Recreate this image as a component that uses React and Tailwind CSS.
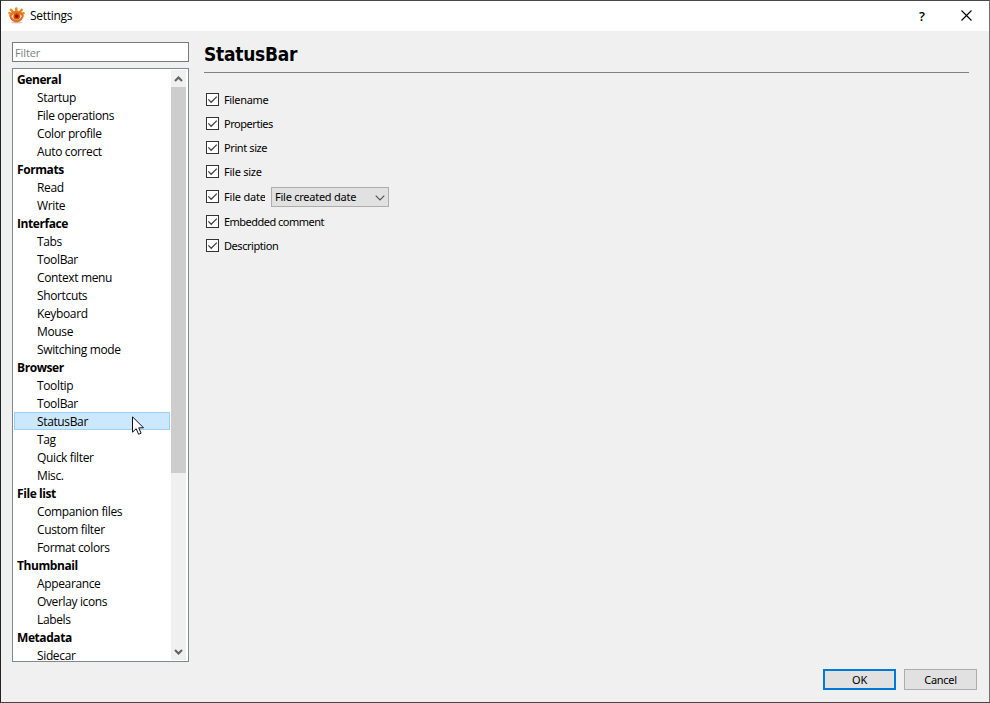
import React from "react";

const TREE = [
  ["General", ["Startup", "File operations", "Color profile", "Auto correct"]],
  ["Formats", ["Read", "Write"]],
  ["Interface", ["Tabs", "ToolBar", "Context menu", "Shortcuts", "Keyboard", "Mouse", "Switching mode"]],
  ["Browser", ["Tooltip", "ToolBar", "StatusBar", "Tag", "Quick filter", "Misc."]],
  ["File list", ["Companion files", "Custom filter", "Format colors"]],
  ["Thumbnail", ["Appearance", "Overlay icons", "Labels"]],
  ["Metadata", ["Sidecar"]],
];

function AppIcon() {
  return (
    <svg width="17" height="17" viewBox="0 0 17 17" className="block">
      <g stroke="#ee8a1d" strokeWidth="2.5" strokeLinecap="round">
        <path d="M8.300 4V1.600M4.800 5L3 2.800M11.900 5l1.800-2.100M3.200 7L1.400 6.200M13.800 7l1.800-.8" />
      </g>
      <ellipse cx="8.500" cy="15.600" rx="5.500" ry=".9" fill="#c9c9c9" />
      <path d="M1.200 8.500C3 5 5.500 3.700 8.500 3.700s5.700 1.300 7.400 4.800c-1 4-3.700 6.800-7.400 6.800S2 12.500 1.200 8.500Z" fill="#e6731b" />
      <path d="M3.300 9c1.500-2 3.200-2.800 5.200-2.800S12.200 7 13.900 9c-1.200 2.600-3 3.700-5.300 3.700S4.500 11.500 3.300 9Z" fill="#f8dcc0" />
      <circle cx="8.700" cy="9.200" r="3.300" fill="#d24a0c" />
      <circle cx="8.700" cy="9.200" r="1.700" fill="#8b1405" />
    </svg>
  );
}

function Check({ children, className = "", textClass = "tracking-[-0.4px]" }) {
  return (
    <label className={"flex items-start h-[14px] " + className}>
      <span className="flex h-[13px] w-[13px] shrink-0 border border-[#333] bg-white">
        <svg width="11" height="11" viewBox="0 0 11 11" className="block" fill="none" stroke="#444" strokeWidth="1.3">
          <path d="M1.300 5.400L4.200 8.300L9.800 2.600" />
        </svg>
      </span>
      <span className={"ml-[5px] whitespace-nowrap " + textClass}>{children}</span>
    </label>
  );
}

export default function App() {
  return (
    <div className="flex h-[703px] w-[990px] flex-col overflow-hidden border border-t-[#4a4747] border-r-[#707070] border-b-[#454343] border-l-[#242226] bg-[#f0f0f0] text-black font-['Open_Sans','Noto_Sans',sans-serif]">
      <header className="flex h-[30px] shrink-0 items-center bg-white">
        <div className="-mt-[2px] ml-[7px]"><AppIcon /></div>
        <span className="ml-[5px] text-[12px] leading-[16px] tracking-[-0.3px]">Settings</span>
        <span className="ml-auto mr-[35px] w-[8px] text-center text-[13px] leading-[16px] font-semibold">?</span>
        <svg width="11" height="11" viewBox="0 0 11 11" className="mr-[17px] -mt-px" stroke="#000" strokeWidth="1.100">
          <path d="M.5.5l10 10M10.500.5l-10 10" />
        </svg>
      </header>
      <div className="flex min-h-0 flex-1">
        <aside className="relative ml-[11px] mt-[11px] flex w-[177px] shrink-0 flex-col">
          <div className="flex h-[20px] items-center border border-[#7a7a7a] bg-white pl-[2px] pt-[2px] text-[11px] leading-[14px] tracking-[-0.1px] text-[#808080]">Filter</div>
          <div className="mt-[6px] flex h-[594px] border border-[#828790] bg-white p-px">
            <div className="w-[156px] overflow-hidden text-[12px] leading-[20px] tracking-[-0.36px]">
              {TREE.map(([group, items]) => (
                <div key={group}>
                  <div className="h-[18px] whitespace-nowrap pl-[3px] font-bold tracking-[-0.42px]">{group}</div>
                  {items.map((item) => (
                    <div
                      key={item}
                      className={
                        "h-[18px] whitespace-nowrap " +
                        (item === "StatusBar" ? "border border-[#99d1ff] bg-[#cce8ff] pl-[22px] leading-[18px]" : "pl-[23px]")
                      }
                    >
                      {item}
                    </div>
                  ))}
                </div>
              ))}
            </div>
            <div className="ml-px flex w-[15px] flex-col items-center bg-[#f0f0f0]">
              <svg width="15" height="17" viewBox="0 0 15 17" fill="none" stroke="#606060" strokeWidth="2">
                <path d="M4 11L7.500 7.500L11 11" />
              </svg>
              <div className="h-[386px] w-[15px] bg-[#cdcdcd]" />
              <svg width="15" height="17" viewBox="0 0 15 17" className="mt-auto" fill="none" stroke="#606060" strokeWidth="2">
                <path d="M4 7L7.500 10.500L11 7" />
              </svg>
            </div>
          </div>
          <svg width="13" height="20" viewBox="0 0 13 20" className="absolute left-[120px] top-[374px]">
            <path d="M.5.8V16.200L4.200 12.700L6.600 18.300L9.100 17.200L6.700 11.800H11.500Z" fill="#fff" stroke="#10101c" />
          </svg>
        </aside>
        <main className="ml-[15px] mr-[20px] flex min-w-0 flex-1 flex-col">
          <h1 className="mt-[11px] h-[31px] border-b border-[#808080] text-[19px] leading-[25px] font-bold tracking-[-0.25px] font-['DejaVu_Sans_Condensed','DejaVu_Sans',sans-serif] [font-stretch:condensed]">StatusBar</h1>
          <div className="ml-[2px] mt-[20px] flex flex-col gap-[10px] text-[11px] leading-[14px] font-['Noto_Sans',sans-serif]">
            <Check textClass="tracking-[-0.35px]">Filename</Check>
            <Check textClass="tracking-[-0.45px]">Properties</Check>
            <Check>Print size</Check>
            <Check textClass="tracking-[-0.25px]">File size</Check>
            <div className="-mt-[2px] -mb-[2px] flex h-[20px] items-center">
              <Check className="w-[65px]" textClass="w-[41px] overflow-hidden tracking-[-0.2px]">File date</Check>
              <div className="flex h-[20px] w-[118px] items-center border border-[#adadad] bg-[#e1e1e1] pl-[3px]">
                <span className="whitespace-nowrap tracking-[-0.25px]">File created date</span>
                <svg width="10" height="6" viewBox="0 0 10 6" className="ml-auto mr-[3px] mt-[2px]" fill="none" stroke="#555" strokeWidth="1.200">
                  <path d="M.7.7L5 5L9.300.7" />
                </svg>
              </div>
            </div>
            <Check textClass="tracking-[-0.52px]">Embedded comment</Check>
            <Check textClass="tracking-[-0.45px]">Description</Check>
          </div>
          <div className="-mr-[8px] mb-[12px] mt-auto flex justify-end gap-[8px] text-[11px] leading-[14px] tracking-[-0.3px] font-['Noto_Sans',sans-serif]">
            <button className="h-[21px] w-[73px] border-2 border-[#0078d7] bg-[#e1e1e1]">OK</button>
            <button className="h-[21px] w-[73px] border border-[#adadad] bg-[#e1e1e1]">Cancel</button>
          </div>
        </main>
      </div>
    </div>
  );
}
